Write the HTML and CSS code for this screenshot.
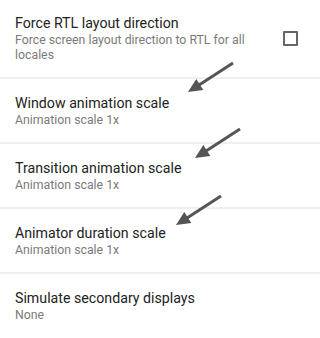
FILE: index.html
```html
<!DOCTYPE html>
<html>
<head>
<meta charset="utf-8">
<link rel="stylesheet" href="styles.css">
</head>
<body>
<div class="screen">
  <ul class="prefs">
    <li class="pref pref-first">
      <div class="pref-text">
        <div class="pref-title">Force RTL layout direction</div>
        <div class="pref-summary">Force screen layout direction to RTL for all locales</div>
      </div>
      <span class="checkbox"></span>
    </li>
    <li class="pref">
      <div class="pref-text">
        <div class="pref-title">Window animation scale</div>
        <div class="pref-summary">Animation scale 1x</div>
      </div>
    </li>
    <li class="pref">
      <div class="pref-text">
        <div class="pref-title">Transition animation scale</div>
        <div class="pref-summary">Animation scale 1x</div>
      </div>
    </li>
    <li class="pref">
      <div class="pref-text">
        <div class="pref-title">Animator duration scale</div>
        <div class="pref-summary">Animation scale 1x</div>
      </div>
    </li>
    <li class="pref">
      <div class="pref-text">
        <div class="pref-title">Simulate secondary displays</div>
        <div class="pref-summary">None</div>
      </div>
    </li>
  </ul>

  <svg class="arrow arrow-1" width="50" height="34" viewBox="0 0 50 34"><line x1="47" y1="2" x2="13" y2="24" /><polygon points="2,31 10.3,17.9 17.3,28.9" /></svg>
  <svg class="arrow arrow-2" width="50" height="34" viewBox="0 0 50 34"><line x1="47" y1="2" x2="13" y2="24" /><polygon points="2,31 10.3,17.9 17.3,28.9" /></svg>
  <svg class="arrow arrow-3" width="50" height="34" viewBox="0 0 50 34"><line x1="47" y1="2" x2="13" y2="24" /><polygon points="2,31 10.3,17.9 17.3,28.9" /></svg>
</div>
</body>
</html>
```

FILE: styles.css
```css
html, body {
  margin: 0;
  padding: 0;
  background: #ffffff;
}

.screen {
  position: relative;
  width: 320px;
  height: 338px;
  overflow: hidden;
  font-family: Roboto, "Noto Sans", sans-serif;
}

.prefs {
  list-style: none;
  margin: 0;
  padding: 0;
}

.pref {
  display: flex;
  align-items: center;
  padding: 14px 22px 14px 15px;
  border-top: 2px solid #efefef;
}

.pref-first {
  border-top: none;
  padding-top: 13px;
}

.pref-text {
  flex: 1;
  min-width: 0;
  padding-right: 20px;
}

.pref-title {
  font-size: 14.2px;
  line-height: 20px;
  color: #222222;
}

.pref-summary {
  font-size: 12.3px;
  line-height: 15px;
  color: #7a7a7a;
}

.checkbox {
  flex: none;
  width: 11px;
  height: 11px;
  border: 2px solid #666666;
  border-radius: 1px;
}

.arrow {
  position: absolute;
}

.arrow line {
  stroke: #555555;
  stroke-width: 3;
}

.arrow polygon {
  fill: #555555;
}

.arrow-1 { left: 186px; top: 61px; }
.arrow-2 { left: 193px; top: 127px; }
.arrow-3 { left: 174px; top: 194px; }
```
